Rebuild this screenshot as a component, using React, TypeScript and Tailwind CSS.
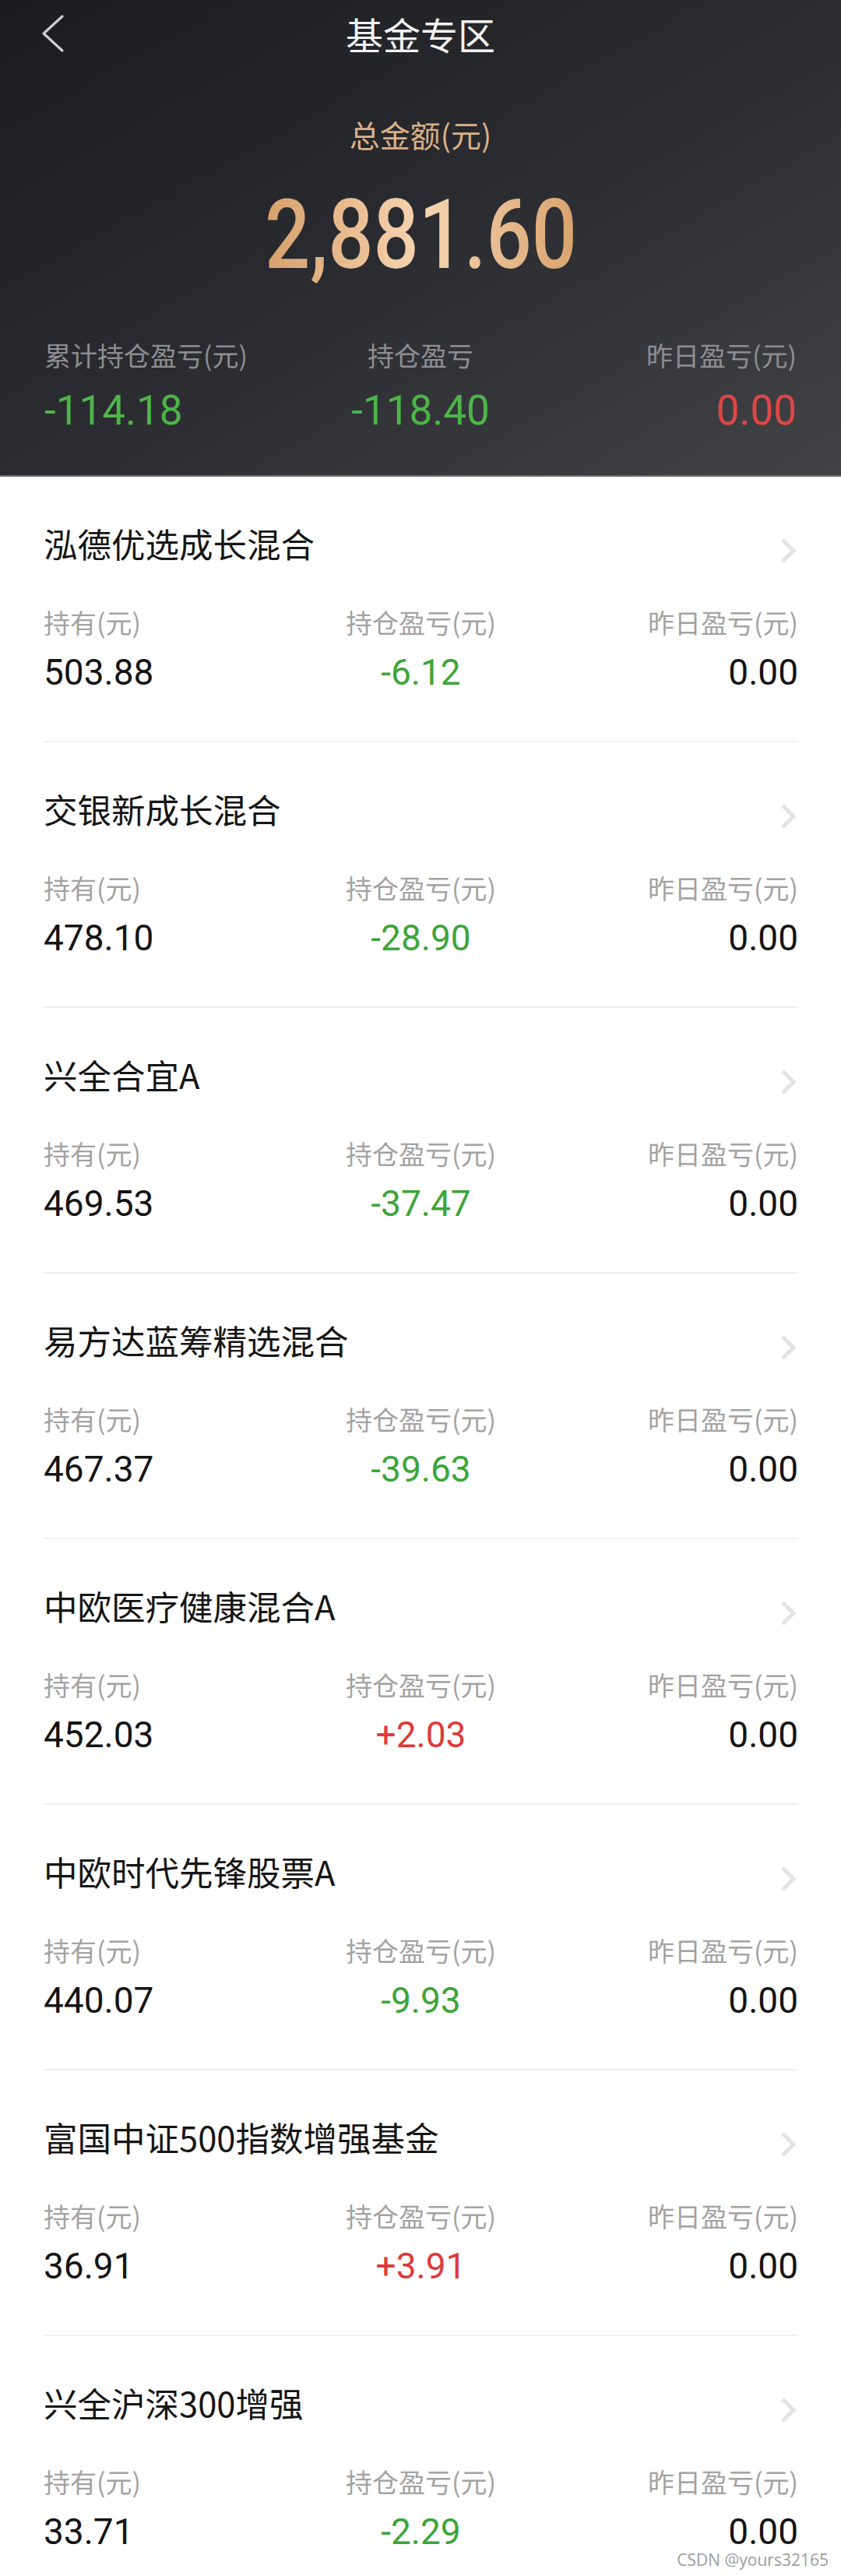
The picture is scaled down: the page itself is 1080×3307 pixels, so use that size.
import React from "react";

type Fund = { name: string; hold: string; pnl: string; yest: string };

const funds: Fund[] = [
  { name: "泓德优选成长混合", hold: "503.88", pnl: "-6.12", yest: "0.00" },
  { name: "交银新成长混合", hold: "478.10", pnl: "-28.90", yest: "0.00" },
  { name: "兴全合宜A", hold: "469.53", pnl: "-37.47", yest: "0.00" },
  { name: "易方达蓝筹精选混合", hold: "467.37", pnl: "-39.63", yest: "0.00" },
  { name: "中欧医疗健康混合A", hold: "452.03", pnl: "+2.03", yest: "0.00" },
  { name: "中欧时代先锋股票A", hold: "440.07", pnl: "-9.93", yest: "0.00" },
  { name: "富国中证500指数增强基金", hold: "36.91", pnl: "+3.91", yest: "0.00" },
  { name: "兴全沪深300增强", hold: "33.71", pnl: "-2.29", yest: "0.00" },
];

const cjk = "font-['Noto_Sans_CJK_SC','Noto_Sans',sans-serif]";
const num = "font-['Roboto','Noto_Sans_CJK_SC',sans-serif]";

function BackIcon() {
  return (
    <svg width="34" height="52" viewBox="0 0 34 52" className="absolute left-[50px] top-[17px]">
      <polyline points="30,4 6,26 30,48" fill="none" stroke="#cfcfd1" strokeWidth="3.2" strokeLinecap="round" strokeLinejoin="round" />
    </svg>
  );
}

function ChevronRight() {
  return (
    <svg width="24" height="36" viewBox="0 0 24 36" className="shrink-0 mt-[16px]">
      <polyline points="4,3 18,17 4,31" fill="none" stroke="#e3e3e3" strokeWidth="5" strokeLinejoin="miter" />
    </svg>
  );
}

function FundItem({ f }: { f: Fund }) {
  const pnlColor = f.pnl.startsWith("+") ? "text-[#dd3b3b]" : "text-[#3ca53a]";
  return (
    <div className="h-[341px] flex flex-col border-b-2 border-[#efefef]">
      <div className="mt-[62px] h-[48px] flex items-start justify-between">
        <div className={`${cjk} text-[43.5px] leading-[48px] text-[#151515]`}>{f.name}</div>
        <ChevronRight />
      </div>
      <div className={`mt-[57px] grid grid-cols-3 ${cjk} text-[34px] leading-[40px] text-[#a3a3a3]`}>
        <div className="text-left">持有(元)</div>
        <div className="text-center">持仓盈亏(元)</div>
        <div className="text-right">昨日盈亏(元)</div>
      </div>
      <div className={`mt-[19px] grid grid-cols-3 ${num} text-[46px] leading-[50px]`}>
        <div className="text-left text-[#141414]">{f.hold}</div>
        <div className={`text-center ${pnlColor}`}>{f.pnl}</div>
        <div className="text-right text-[#141414]">{f.yest}</div>
      </div>
    </div>
  );
}

export default function App() {
  return (
    <div className="relative w-[1080px] h-[3307px] overflow-hidden bg-white">
      <div className="h-[612px] bg-gradient-to-br from-[#1b1c20] via-[#2b2c31] to-[#424347] border-b-2 border-[#6e6e70] flex flex-col">
        <div className="relative h-[86px] flex items-center justify-center">
          <BackIcon />
          <div className={`${cjk} text-[48px] leading-none text-[#f2f2f2]`}>基金专区</div>
        </div>
        <div className={`mt-[66px] text-center ${cjk} text-[39px] leading-[40px] text-[#dcb086]`}>总金额(元)</div>
        <div className="mt-[47px] h-[125px] flex justify-center">
          <span
            className={`${num} font-medium inline-block scale-x-[0.82] text-[125px] leading-none bg-gradient-to-r from-[#d7a06b] via-[#f6d5b1] to-[#d9a36e] bg-clip-text text-transparent`}
          >
            2,881.60
          </span>
        </div>
        <div className={`mt-[72px] px-[57px] grid grid-cols-3 ${cjk} text-[34px] leading-[40px] text-[#8e8e92]`}>
          <div className="text-left">累计持仓盈亏(元)</div>
          <div className="text-center">持仓盈亏</div>
          <div className="text-right">昨日盈亏(元)</div>
        </div>
        <div className={`mt-[25px] px-[57px] grid grid-cols-3 ${num} text-[53px] leading-none`}>
          <div className="text-left text-[#4db548]">-114.18</div>
          <div className="text-center text-[#4db548]">-118.40</div>
          <div className="text-right text-[#e04646]">0.00</div>
        </div>
      </div>
      <div className="pl-[56px] pr-[55px]">
        {funds.map((f) => (
          <FundItem key={f.name} f={f} />
        ))}
      </div>
      <div className="absolute right-[16px] bottom-[8px] font-['Open_Sans',sans-serif] text-[21px] leading-[26px] text-[#9c9c9c] [text-shadow:0_0_2px_#ffffff]">
        CSDN @yours32165
      </div>
    </div>
  );
}
